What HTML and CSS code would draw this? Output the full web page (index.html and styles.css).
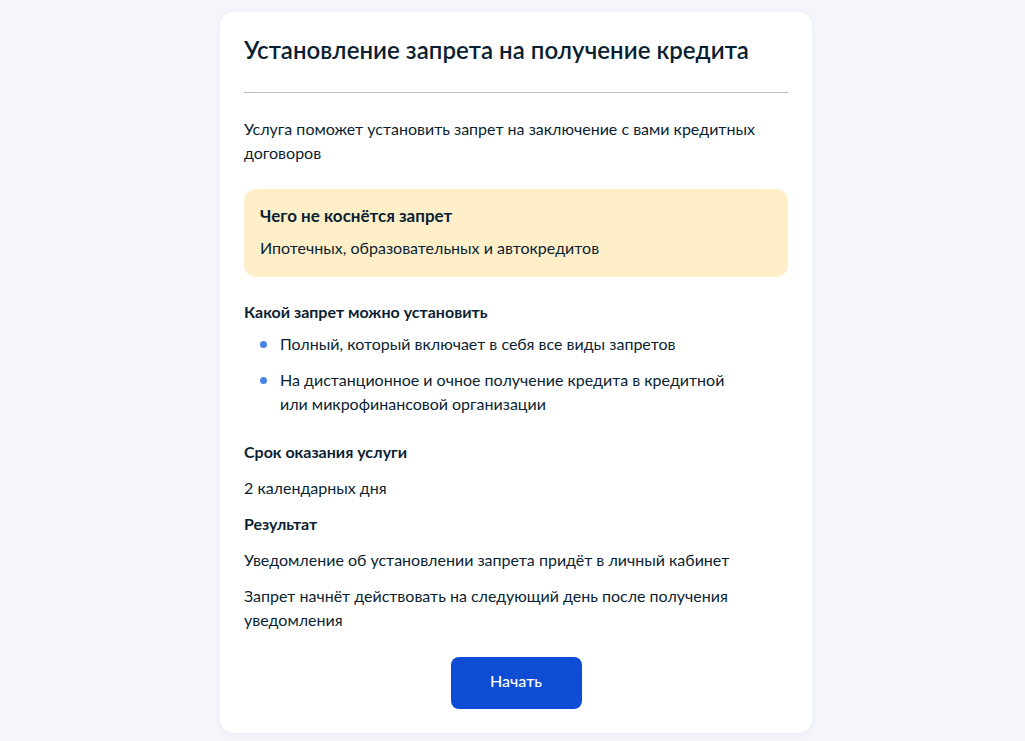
FILE: index.html
```html
<!DOCTYPE html>
<html lang="ru">
<head>
<meta charset="utf-8">
<title>Установление запрета на получение кредита</title>
<link rel="stylesheet" href="styles.css">
</head>
<body>
<div class="page">
  <main class="card">
    <h1 class="title">Установление запрета на получение кредита</h1>
    <hr class="divider">
    <p class="text lead">Услуга поможет установить запрет на заключение с вами кредитных договоров</p>
    <div class="notice">
      <h2 class="notice-title">Чего не коснётся запрет</h2>
      <p class="text">Ипотечных, образовательных и автокредитов</p>
    </div>
    <h3 class="subtitle first">Какой запрет можно установить</h3>
    <ul class="list">
      <li class="list-item">Полный, который включает в себя все виды запретов</li>
      <li class="list-item">На дистанционное и очное получение кредита в кредитной или&nbsp;микрофинансовой организации</li>
    </ul>
    <h3 class="subtitle">Срок оказания услуги</h3>
    <p class="text gap">2 календарных дня</p>
    <h3 class="subtitle gap">Результат</h3>
    <p class="text gap">Уведомление об установлении запрета придёт в личный кабинет</p>
    <p class="text gap narrow">Запрет начнёт действовать на следующий день после получения уведомления</p>
    <div class="actions">
      <button class="button" type="button">Начать</button>
    </div>
  </main>
</div>
</body>
</html>
```

FILE: styles.css
```css
* { box-sizing: border-box; }
html, body { margin: 0; padding: 0; }
body {
  background: #f4f6fb;
  font-family: "Lato", "Noto Sans", sans-serif;
  color: #0b1f33;
  -webkit-font-smoothing: antialiased;
}
.page {
  display: flex;
  justify-content: center;
  padding: 12px 0 8px 7px;
}
.card {
  width: 592px;
  background: #ffffff;
  border-radius: 14px;
  padding: 24px 24px 24px;
  box-shadow: 0 1px 6px rgba(30, 60, 120, 0.06);
}
.title {
  margin: 0;
  font-size: 24px;
  line-height: 28px;
  font-weight: 600;
  letter-spacing: 0.05px;
}
.divider {
  margin: 28px 0 0;
  border: 0;
  border-top: 1px solid #b2bdcc;
  height: 0;
}
.text {
  margin: 0;
  font-size: 16px;
  line-height: 24px;
  font-weight: 400;
}
.lead { margin-top: 24px; padding-right: 20px; }
.notice {
  margin-top: 24px;
  background: #feefc9;
  border-radius: 12px;
  padding: 16px 16px 17px;
  display: flex;
  flex-direction: column;
  gap: 9px;
}
.notice-title {
  margin: 0;
  font-size: 17px;
  line-height: 22px;
  font-weight: 700;
}
.subtitle {
  margin: 24px 0 0;
  font-size: 16px;
  line-height: 24px;
  font-weight: 700;
}
.subtitle.first { margin-top: 23px; }
.subtitle.gap { margin-top: 12px; }
.gap { margin-top: 12px; }
.narrow { padding-right: 50px; }
.list {
  list-style: none;
  margin: 8px 0 0;
  padding: 0 60px 0 36px;
  display: flex;
  flex-direction: column;
  gap: 12px;
}
.list-item {
  position: relative;
  font-size: 16px;
  line-height: 24px;
}
.list-item::before {
  content: "";
  position: absolute;
  left: -20px;
  top: 9px;
  width: 7px;
  height: 7px;
  border-radius: 50%;
  background: #4b82e8;
}
.actions {
  margin-top: 25px;
  display: flex;
  justify-content: center;
}
.button {
  width: 131px;
  height: 52px;
  border: 0;
  border-radius: 8px;
  background: #0d4cd3;
  color: #ffffff;
  font-family: "Lato", "Noto Sans", sans-serif;
  font-size: 16px;
  font-weight: 500;
  line-height: 20px;
  padding: 0 0 4px;
  cursor: pointer;
}
```
